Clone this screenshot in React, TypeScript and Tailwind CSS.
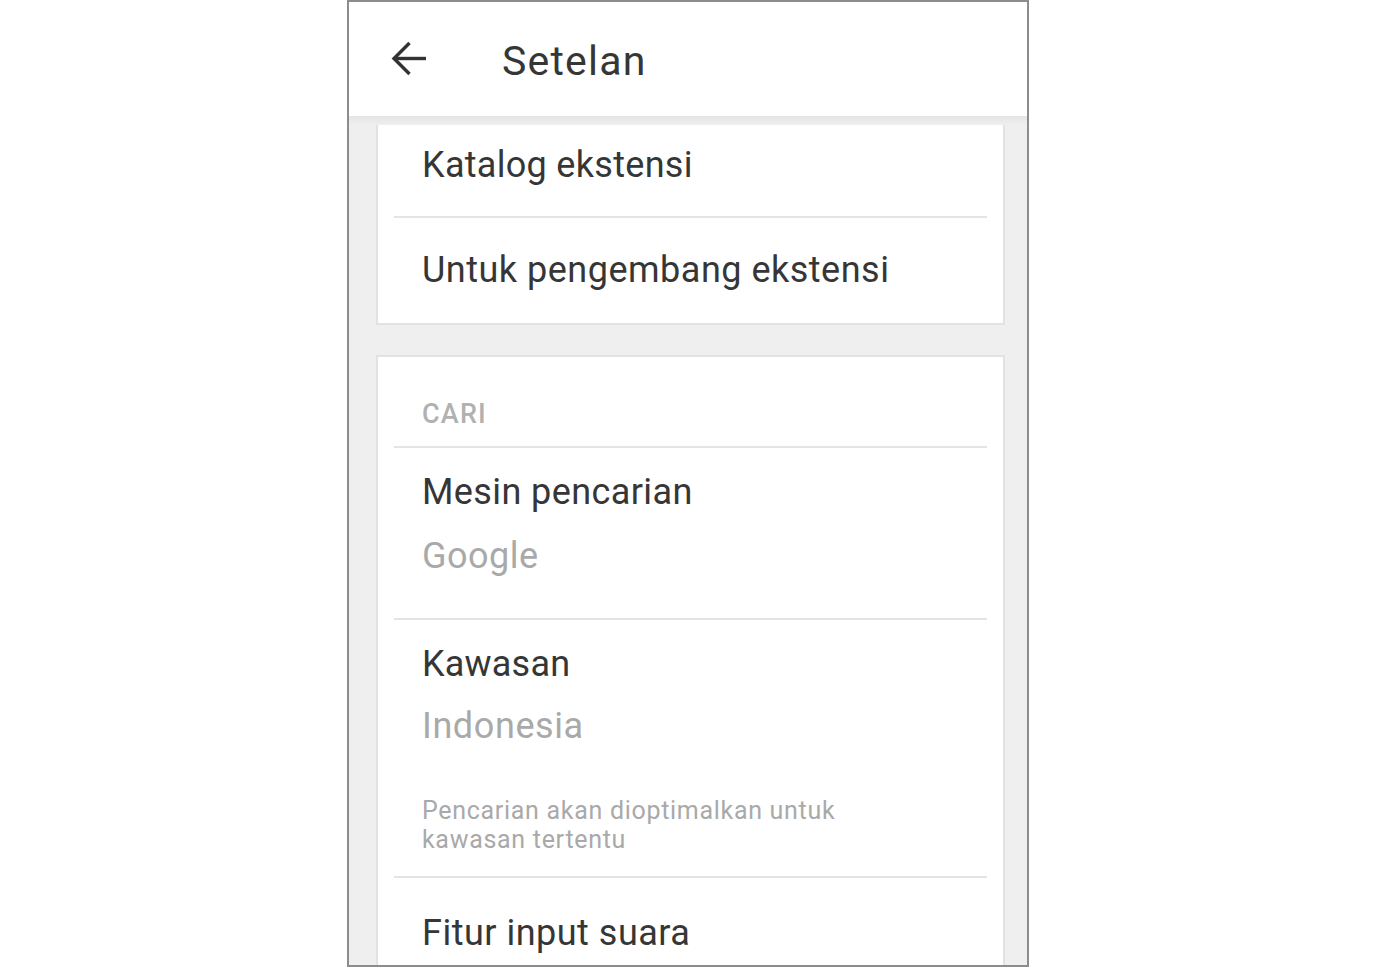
import React from 'react';

const dark = 'text-[#363636]';
const muted = 'text-[#a9a9a9]';

const Divider: React.FC = () => <div className="mx-[16px] h-[2px] bg-[#e4e4e4]" />;

const App: React.FC = () => {
    return (
        <div className="w-[1375px] h-[968px] bg-white font-['Roboto','Noto_Sans',sans-serif]">
            <div className="ml-[347px] w-[682px] h-[967px] border-2 border-[#8c8c8c] flex flex-col overflow-hidden">
                {/* Toolbar */}
                <div className="h-[114px] shrink-0 bg-white flex items-center pl-[42px]">
                    <svg width="37" height="36" viewBox="0 0 37 36" fill="none" stroke="#333" strokeWidth="3.4">
                        <path d="M3 17.5H35" />
                        <path d="M18.5 2L3 17.5L18.5 33" strokeLinejoin="miter" />
                    </svg>
                    <h1 className={`ml-[74px] mt-[4px] text-[41px] leading-[40px] tracking-[1.2px] ${dark}`}>Setelan</h1>
                </div>

                {/* Scrolling content */}
                <div className="flex-1 bg-[#efefef] bg-[linear-gradient(#e4e4e4,#efefef_9px)] pt-[9px] pl-[27px] pr-[22px] overflow-hidden">
                    {/* Extensions card */}
                    <div className="bg-white border-x-2 border-b-2 border-[#e2e2e2]">
                        <div className="pt-[20px] pb-[31px] pl-[44px]">
                            <p className={`text-[36px] leading-[40px] tracking-[0.3px] ${dark}`}>Katalog ekstensi</p>
                        </div>
                        <Divider />
                        <div className="pt-[32px] pb-[33px] pl-[44px]">
                            <p className={`text-[36px] leading-[40px] tracking-[0.5px] ${dark}`}>Untuk pengembang ekstensi</p>
                        </div>
                    </div>

                    {/* Search card */}
                    <div className="mt-[30px] bg-white border-x-2 border-t-2 border-[#e2e2e2]">
                        <div className="pt-[42px] pb-[17px] pl-[44px]">
                            <p className="text-[27px] leading-[30px] font-medium tracking-[1.2px] text-[#b1b1b1]">CARI</p>
                        </div>
                        <Divider />
                        <div className="pt-[24px] pb-[42px] pl-[44px]">
                            <p className={`text-[36px] leading-[40px] tracking-[0.4px] ${dark}`}>Mesin pencarian</p>
                            <p className={`mt-[24px] text-[36px] leading-[40px] tracking-[0.5px] ${muted}`}>Google</p>
                        </div>
                        <Divider />
                        <div className="pt-[24px] pb-[22px] pl-[44px]">
                            <p className={`text-[36px] leading-[40px] tracking-[0.2px] ${dark}`}>Kawasan</p>
                            <p className={`mt-[22px] text-[36px] leading-[40px] tracking-[0.6px] ${muted}`}>Indonesia</p>
                            <p className={`mt-[50px] w-[460px] text-[25px] leading-[29px] tracking-[0.7px] ${muted}`}>
                                Pencarian akan dioptimalkan untuk kawasan tertentu
                            </p>
                        </div>
                        <Divider />
                        <div className="pt-[35px] pb-[30px] pl-[44px]">
                            <p className={`text-[36px] leading-[40px] tracking-[0.5px] ${dark}`}>Fitur input suara</p>
                        </div>
                    </div>
                </div>
            </div>
        </div>
    );
};

export default App;
